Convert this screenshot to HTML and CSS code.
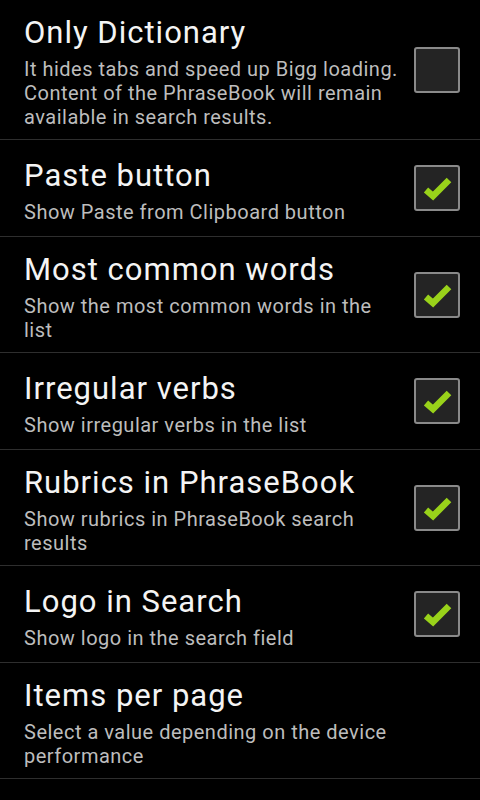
FILE: index.html
```html
<!DOCTYPE html>
<html lang="en">
<head>
    <meta charset="UTF-8">
    <meta name="viewport" content="width=device-width, initial-scale=1.0">
    <title>Settings</title>
    <link rel="stylesheet" href="styles.css">
</head>
<body>
    <ul class="pref-list">
        <li class="pref">
            <div class="pref-text">
                <div class="pref-title">Only Dictionary</div>
                <div class="pref-summary">It hides tabs and speed up Bigg loading. Content of the PhraseBook will remain available in search results.</div>
            </div>
            <span class="checkbox"></span>
        </li>
        <li class="pref">
            <div class="pref-text">
                <div class="pref-title">Paste button</div>
                <div class="pref-summary">Show Paste from Clipboard button</div>
            </div>
            <span class="checkbox checked"><svg viewBox="0 0 46 46"><path d="M12 25 L19 31 L35 15"/></svg></span>
        </li>
        <li class="pref">
            <div class="pref-text">
                <div class="pref-title">Most common words</div>
                <div class="pref-summary">Show the most common words in the list</div>
            </div>
            <span class="checkbox checked"><svg viewBox="0 0 46 46"><path d="M12 25 L19 31 L35 15"/></svg></span>
        </li>
        <li class="pref">
            <div class="pref-text">
                <div class="pref-title">Irregular verbs</div>
                <div class="pref-summary">Show irregular verbs in the list</div>
            </div>
            <span class="checkbox checked"><svg viewBox="0 0 46 46"><path d="M12 25 L19 31 L35 15"/></svg></span>
        </li>
        <li class="pref">
            <div class="pref-text">
                <div class="pref-title">Rubrics in PhraseBook</div>
                <div class="pref-summary">Show rubrics in PhraseBook search results</div>
            </div>
            <span class="checkbox checked"><svg viewBox="0 0 46 46"><path d="M12 25 L19 31 L35 15"/></svg></span>
        </li>
        <li class="pref">
            <div class="pref-text">
                <div class="pref-title">Logo in Search</div>
                <div class="pref-summary">Show logo in the search field</div>
            </div>
            <span class="checkbox checked"><svg viewBox="0 0 46 46"><path d="M12 25 L19 31 L35 15"/></svg></span>
        </li>
        <li class="pref">
            <div class="pref-text">
                <div class="pref-title">Items per page</div>
                <div class="pref-summary">Select a value depending on the device performance</div>
            </div>
        </li>
    </ul>
</body>
</html>
```

FILE: styles.css
```css
body {
    margin: 0;
    background: #000;
    font-family: Roboto, "Noto Sans", sans-serif;
}

.pref-list { list-style: none; margin: 0; padding: 0; }

.pref {
    display: flex;
    align-items: center;
    min-height: 96px;
    padding: 0 20px 0 24px;
    border-bottom: 1px solid #2e2e2e;
}

.pref-text { flex: 1; padding: 15px 0 10px; }

.pref-title {
    font-size: 31px;
    line-height: 36px;
    letter-spacing: 1px;
    color: #f4f4f4;
    margin-bottom: 6px;
}

.pref-summary {
    font-size: 20px;
    line-height: 24px;
    letter-spacing: 0.5px;
    color: #bdbdbd;
}

.checkbox {
    flex: none;
    width: 42px;
    height: 42px;
    margin-left: 10px;
    border: 2px solid #8a8a8a;
    border-radius: 3px;
    background: #242424;
}
.checkbox svg { display: block; width: 46px; height: 46px; margin: -2px; }
.checkbox path {
    fill: none;
    stroke: #99d21a;
    stroke-width: 6.5;
    stroke-linecap: butt;
    stroke-linejoin: miter;
}
```
